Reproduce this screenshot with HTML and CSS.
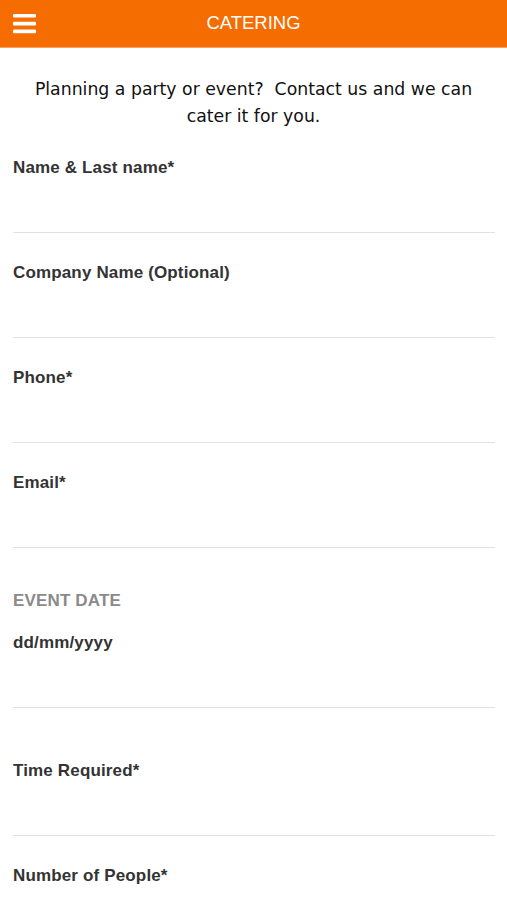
FILE: index.html
```html
<!DOCTYPE html>
<html lang="en">
<head>
<meta charset="utf-8">
<title>Catering</title>
<link rel="stylesheet" href="styles.css">
</head>
<body>
<header class="topbar">
  <button class="menu-btn" aria-label="Menu">
    <svg width="23" height="20" viewBox="0 0 23 20"><rect x="0" y="0" width="23" height="3.6" rx="1" fill="#fff"/><rect x="0" y="7.8" width="23" height="3.6" rx="1" fill="#fff"/><rect x="0" y="15.6" width="23" height="3.6" rx="1" fill="#fff"/></svg>
  </button>
  <h1 class="title">CATERING</h1>
</header>
<main class="content">
  <p class="intro">Planning a party or event?&nbsp; Contact us and we can cater it for you.</p>
  <form class="form">
    <div class="field field-first"><label class="label">Name &amp; Last name*</label></div>
    <div class="field"><label class="label">Company Name (Optional)</label></div>
    <div class="field"><label class="label">Phone*</label></div>
    <div class="field"><label class="label">Email*</label></div>
    <div class="field field-date">
      <div class="section-title">EVENT DATE</div>
      <label class="label date-label">dd/mm/yyyy</label>
    </div>
    <div class="field field-time"><label class="label">Time Required*</label></div>
    <div class="field"><label class="label">Number of People*</label></div>
  </form>
</main>
</body>
</html>
```
FILE: styles.css
```css
* { box-sizing: border-box; }
html, body { margin: 0; padding: 0; background: #fff; }
body { font-family: "Liberation Sans", Arial, sans-serif; color: #333; }

.topbar {
  height: 48px;
  background: #f56c00;
  display: flex;
  align-items: center;
  justify-content: center;
  position: relative;
  border-bottom: 1px solid #f7a060;
}
.menu-btn {
  position: absolute;
  left: 13px;
  top: 14px;
  padding: 0;
  border: 0;
  background: none;
  display: block;
  line-height: 0;
}
.title {
  margin: 0;
  font-size: 18.5px;
  font-weight: normal;
  color: #fff;
  margin-top: -1px;
}

.content { padding: 0 13px; }
.intro {
  margin: 0;
  padding: 28px 18px 0;
  font-family: "DejaVu Sans", Verdana, sans-serif;
  font-size: 17.3px;
  line-height: 27px;
  text-align: center;
  color: #111;
}
.field {
  border-bottom: 1px solid #e2e2e2;
  padding-top: 30px;
  padding-bottom: 54px;
  margin-right: -1px;
}
.field-first { padding-top: 28px; }
.field-date { padding-top: 43px; }
.field-time { padding-top: 53px; }
.label {
  display: block;
  font-size: 17px;
  letter-spacing: 0.15px;
  line-height: 20px;
  font-weight: bold;
  color: #333;
}
.section-title {
  font-size: 17px;
  letter-spacing: 0.15px;
  line-height: 20px;
  font-weight: bold;
  color: #8a8a8a;
}
.date-label { margin-top: 22px; }
```
